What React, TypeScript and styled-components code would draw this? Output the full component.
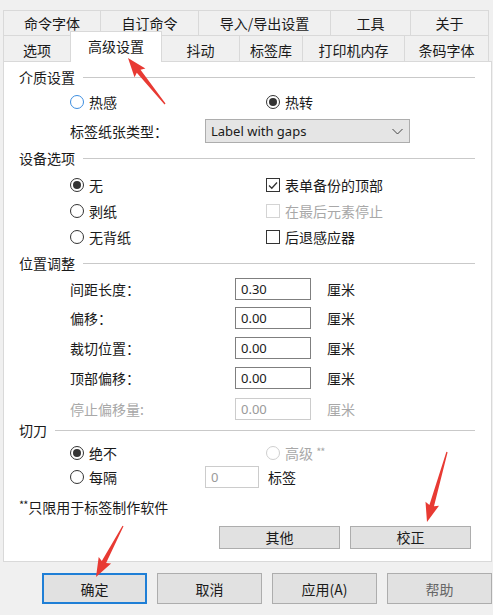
import React from "react";
import styled, { createGlobalStyle, css } from "styled-components";

const Global = createGlobalStyle`
  html, body { margin: 0; padding: 0; background: #f0f0f0; }
  #root { width: 493px; height: 615px; overflow: hidden; }
  * { box-sizing: border-box; }
`;

const CJK = `"Noto Sans CJK SC", "Noto Sans", sans-serif`;
const LATIN = `"Noto Sans", "Noto Sans CJK SC", sans-serif`;

const Window = styled.div`
  position: relative;
  width: 493px;
  height: 615px;
  padding-top: 10px;
  background: #f0f0f0;
  font-family: ${CJK};
  font-size: 14px;
  color: #111;
`;

const TabArea = styled.div`
  margin-left: 3px;
  width: 486px;
`;

const TabRow = styled.div<{ $h: number }>`
  display: flex;
  height: ${(p) => p.$h}px;
  border-right: 1px solid #d9d9d9;
`;

const Tab = styled.div<{ $w: number; $active?: boolean; $pt?: number }>`
  width: ${(p) => p.$w}px;
  flex: none;
  display: flex;
  align-items: center;
  justify-content: center;
  padding-top: ${(p) => p.$pt ?? 0}px;
  border-top: 1px solid #d9d9d9;
  border-left: 1px solid #d9d9d9;
  background: #f0f0f0;
  color: #1a1a1a;
  white-space: nowrap;
  ${(p) =>
    p.$active &&
    css`
      position: relative;
      z-index: 1;
      margin-top: -4px;
      margin-bottom: -1px;
      padding-top: 0;
      padding-bottom: 2px;
      background: #fff;
      border-right: 1px solid #d9d9d9;
      margin-right: -1px;
    `}
`;

const Panel = styled.div`
  margin-left: 3px;
  width: 489px;
  height: 501px;
  background: #fff;
  border: 1px solid #d9d9d9;
  display: flex;
  flex-direction: column;
`;

const GroupHeader = styled.div<{ $mt: number }>`
  display: flex;
  align-items: center;
  gap: 8px;
  height: 20px;
  margin-top: ${(p) => p.$mt}px;
  padding-left: 15px;
  margin-right: 16px;
  color: #1a1a1a;
  &::after {
    content: "";
    flex: 1;
    height: 1px;
    background: #c9c9c9;
  }
`;

const Row = styled.div<{ $mt: number }>`
  display: flex;
  align-items: center;
  height: 24px;
  margin-top: ${(p) => p.$mt}px;
  padding-left: 66px;
`;

const Cell = styled.div<{ $w?: number }>`
  display: flex;
  align-items: center;
  flex: none;
  width: ${(p) => (p.$w ? `${p.$w}px` : "auto")};
  white-space: nowrap;
`;

const Text = styled.span<{ $disabled?: boolean }>`
  color: ${(p) => (p.$disabled ? "#a8a8a8" : "#1a1a1a")};
`;

const Radio = styled.span<{ $checked?: boolean; $disabled?: boolean; $focus?: boolean }>`
  position: relative;
  display: inline-block;
  width: 14px;
  height: 14px;
  margin-right: 5px;
  border-radius: 50%;
  border: 1px solid
    ${(p) => (p.$disabled ? "#cfcfcf" : p.$focus ? "#3d8ee0" : "#333")};
  background: #fff;
  flex: none;
  ${(p) =>
    p.$checked &&
    css`
      &::after {
        content: "";
        position: absolute;
        left: 2px;
        top: 2px;
        width: 8px;
        height: 8px;
        border-radius: 50%;
        background: #333;
      }
    `}
`;

const Box = styled.span<{ $disabled?: boolean }>`
  display: inline-flex;
  align-items: center;
  justify-content: center;
  width: 14px;
  height: 14px;
  margin-right: 5px;
  border: 1px solid ${(p) => (p.$disabled ? "#d4d4d4" : "#333")};
  background: #fff;
  flex: none;
`;

const Field = styled.div<{ $w: number; $disabled?: boolean }>`
  width: ${(p) => p.$w}px;
  height: 22px;
  display: flex;
  align-items: center;
  padding-left: 5px;
  background: #fff;
  border: 1px solid ${(p) => (p.$disabled ? "#cccccc" : "#7f7f7f")};
  color: ${(p) => (p.$disabled ? "#9a9a9a" : "#1a1a1a")};
  font-family: ${LATIN};
  font-size: 13px;
  flex: none;
`;

const Unit = styled.span<{ $disabled?: boolean; $ml: number }>`
  margin-left: ${(p) => p.$ml}px;
  color: ${(p) => (p.$disabled ? "#a8a8a8" : "#1a1a1a")};
`;

const Select = styled.div`
  width: 205px;
  height: 24px;
  display: flex;
  align-items: center;
  justify-content: space-between;
  padding: 0 6px 0 5px;
  background: #e5e5e5;
  border: 1px solid #adadad;
  font-family: ${LATIN};
  font-size: 13px;
  color: #1a1a1a;
`;

const Note = styled.div<{ $mt: number }>`
  height: 24px;
  display: flex;
  align-items: center;
  margin-top: ${(p) => p.$mt}px;
  padding-left: 15px;
  color: #1a1a1a;
`;

const Stars = styled.span`
  font-size: 11px;
  position: relative;
  top: -3px;
  letter-spacing: -1px;
  margin-right: 1px;
`;

const PanelButtons = styled.div<{ $mt: number }>`
  display: flex;
  justify-content: flex-end;
  align-items: center;
  gap: 10px;
  height: 24px;
  margin-top: ${(p) => p.$mt}px;
  padding-right: 20px;
`;

const Button = styled.div<{ $w: number; $h: number; $primary?: boolean; $faded?: boolean }>`
  width: ${(p) => p.$w}px;
  height: ${(p) => p.$h}px;
  flex: none;
  display: flex;
  align-items: center;
  justify-content: center;
  background: #e1e1e1;
  border: 1px solid ${(p) => (p.$primary ? "#1f7fd6" : "#adadad")};
  box-shadow: ${(p) => (p.$primary ? "inset 0 0 0 1px #1f7fd6" : "none")};
  color: ${(p) => (p.$faded ? "#666" : "#1a1a1a")};
  font-size: 14px;
`;

const Footer = styled.div`
  display: flex;
  gap: 10px;
  margin-top: 11px;
  padding-left: 42px;
`;

const Overlay = styled.svg`
  position: absolute;
  left: 0;
  top: 0;
  width: 493px;
  height: 615px;
  pointer-events: none;
  z-index: 5;
`;

function arrow(tx: number, ty: number, hx: number, hy: number) {
  const dx = hx - tx;
  const dy = hy - ty;
  const len = Math.hypot(dx, dy);
  const ux = dx / len;
  const uy = dy / len;
  const nx = -uy;
  const ny = ux;
  const L = 17;
  const W = 7;
  const bx = hx - ux * L;
  const by = hy - uy * L;
  const pts = [
    [tx + nx * 0.6, ty + ny * 0.6],
    [bx + nx * 2.4, by + ny * 2.4],
    [bx + nx * W - ux * 2, by + ny * W - uy * 2],
    [hx, hy],
    [bx - nx * W - ux * 2, by - ny * W - uy * 2],
    [bx - nx * 2.4, by - ny * 2.4],
    [tx - nx * 0.6, ty - ny * 0.6],
  ];
  return pts.map((p) => `${p[0].toFixed(1)},${p[1].toFixed(1)}`).join(" ");
}

const Check = () => (
  <svg width="10" height="9" viewBox="0 0 10 9">
    <polyline points="1,4.5 3.8,7.2 9,1.5" fill="none" stroke="#333" strokeWidth="1.3" />
  </svg>
);

const Chevron = () => (
  <svg width="11" height="7" viewBox="0 0 11 7">
    <polyline points="0.5,1 5.5,6 10.5,1" fill="none" stroke="#444" strokeWidth="1" />
  </svg>
);

const row1 = [
  { t: "命令字体", w: 97 },
  { t: "自订命令", w: 98 },
  { t: "导入/导出设置", w: 132 },
  { t: "工具", w: 80 },
  { t: "关于", w: 78 },
];

const row2 = [
  { t: "选项", w: 67 },
  { t: "高级设置", w: 92, active: true },
  { t: "抖动", w: 78 },
  { t: "标签库", w: 63 },
  { t: "打印机内存", w: 102 },
  { t: "条码字体", w: 84 },
];

const offsets = [
  { label: "间距长度：", value: "0.30", mt: 4 },
  { label: "偏移：", value: "0.00", mt: 5 },
  { label: "裁切位置：", value: "0.00", mt: 6 },
  { label: "顶部偏移：", value: "0.00", mt: 6 },
  { label: "停止偏移量:", value: "0.00", mt: 7, disabled: true },
];

export default function App() {
  return (
    <Window>
      <Global />
      <TabArea>
        <TabRow $h={25}>
          {row1.map((t) => (
            <Tab key={t.t} $w={t.w}>
              {t.t}
            </Tab>
          ))}
        </TabRow>
        <TabRow $h={26}>
          {row2.map((t) => (
            <Tab key={t.t} $w={t.w} $active={t.active} $pt={2}>
              {t.t}
            </Tab>
          ))}
        </TabRow>
      </TabArea>
      <Panel>
        <GroupHeader $mt={5}>介质设置</GroupHeader>
        <Row $mt={3}>
          <Cell $w={196}>
            <Radio $focus />
            <Text>热感</Text>
          </Cell>
          <Cell>
            <Radio $checked />
            <Text>热转</Text>
          </Cell>
        </Row>
        <Row $mt={5}>
          <Cell $w={135}>
            <Text>标签纸张类型：</Text>
          </Cell>
          <Select>
            <span>Label with gaps</span>
            <Chevron />
          </Select>
        </Row>

        <GroupHeader $mt={5}>设备选项</GroupHeader>
        <Row $mt={5}>
          <Cell $w={196}>
            <Radio $checked />
            <Text>无</Text>
          </Cell>
          <Cell>
            <Box>
              <Check />
            </Box>
            <Text>表单备份的顶部</Text>
          </Cell>
        </Row>
        <Row $mt={2}>
          <Cell $w={196}>
            <Radio />
            <Text>剥纸</Text>
          </Cell>
          <Cell>
            <Box $disabled />
            <Text $disabled>在最后元素停止</Text>
          </Cell>
        </Row>
        <Row $mt={2}>
          <Cell $w={196}>
            <Radio />
            <Text>无背纸</Text>
          </Cell>
          <Cell>
            <Box />
            <Text>后退感应器</Text>
          </Cell>
        </Row>

        <GroupHeader $mt={4}>位置调整</GroupHeader>
        {offsets.map((o) => (
          <Row key={o.label} $mt={o.mt}>
            <Cell $w={165}>
              <Text $disabled={o.disabled}>{o.label}</Text>
            </Cell>
            <Field $w={76} $disabled={o.disabled}>
              {o.value}
            </Field>
            <Unit $ml={16} $disabled={o.disabled}>
              厘米
            </Unit>
          </Row>
        ))}

        <GroupHeader $mt={-1}>切刀</GroupHeader>
        <Row $mt={1}>
          <Cell $w={196}>
            <Radio $checked />
            <Text>绝不</Text>
          </Cell>
          <Cell>
            <Radio $disabled />
            <Text $disabled>
              高级 <Stars>**</Stars>
            </Text>
          </Cell>
        </Row>
        <Row $mt={0}>
          <Cell $w={135}>
            <Radio />
            <Text>每隔</Text>
          </Cell>
          <Field $w={54} $disabled>
            0
          </Field>
          <Unit $ml={9}>标签</Unit>
        </Row>

        <Note $mt={6}>
          <Stars>**</Stars>只限用于标签制作软件
        </Note>
        <PanelButtons $mt={6}>
          <Button $w={121} $h={23}>
            其他
          </Button>
          <Button $w={121} $h={23}>
            校正
          </Button>
        </PanelButtons>
      </Panel>
      <Footer>
        <Button $w={105} $h={31} $primary>
          确定
        </Button>
        <Button $w={105} $h={31}>
          取消
        </Button>
        <Button $w={105} $h={31}>
          应用(A)
        </Button>
        <Button $w={105} $h={31} $faded>
          帮助
        </Button>
      </Footer>
      <Overlay viewBox="0 0 493 615">
        <polygon points={arrow(165, 104, 128, 58)} fill="#e83a33" />
        <polygon points={arrow(447, 452, 427, 522)} fill="#e83a33" />
        <polygon points={arrow(123, 526, 96, 577)} fill="#e83a33" />
      </Overlay>
    </Window>
  );
}
